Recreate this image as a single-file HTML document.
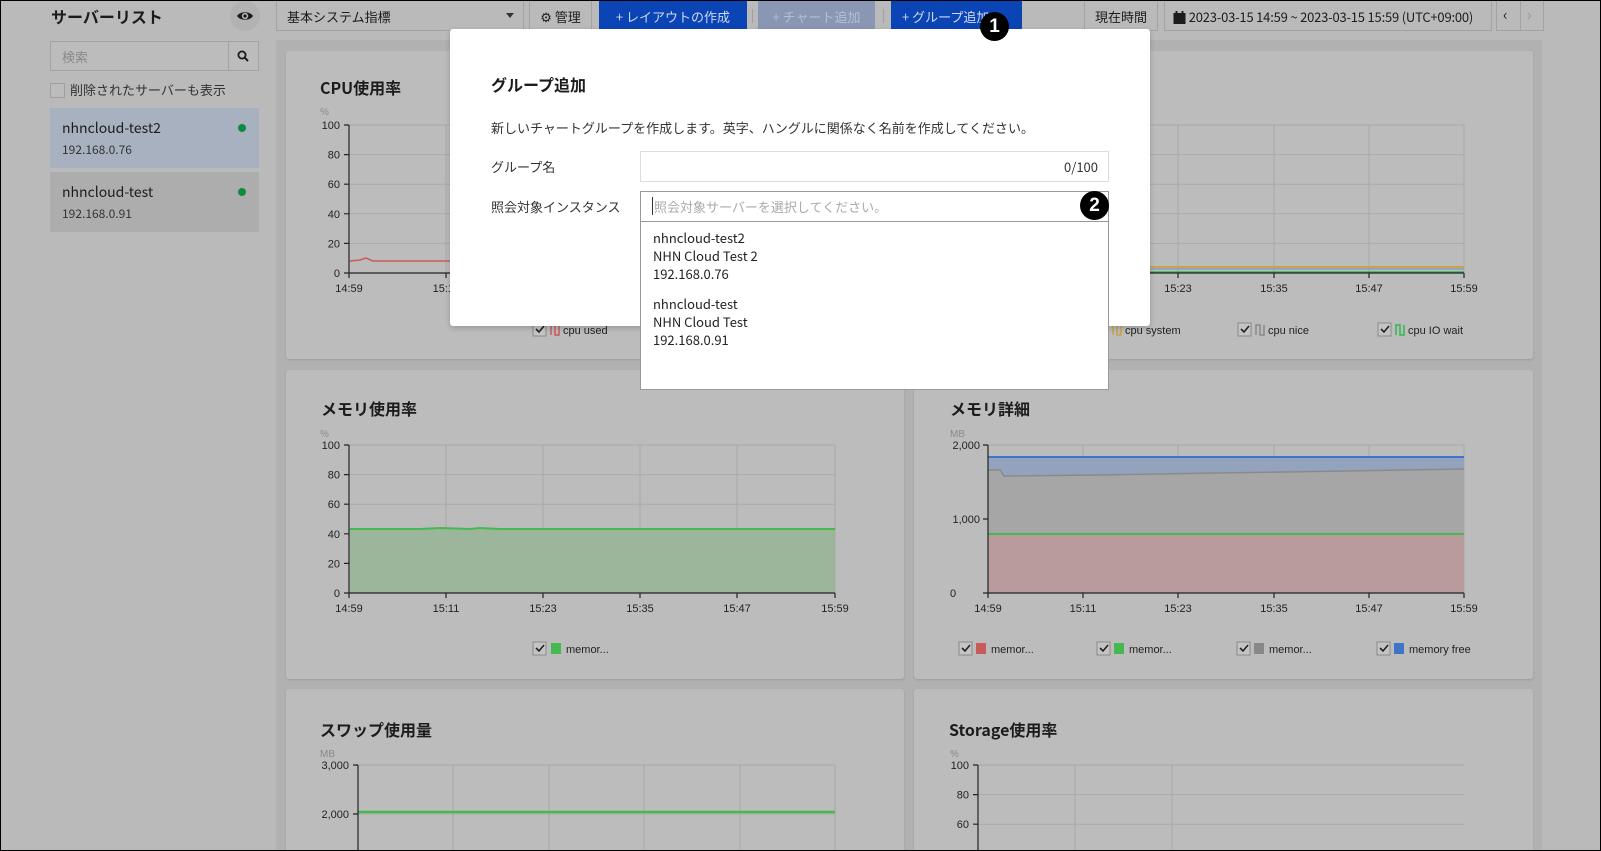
<!DOCTYPE html>
<html style="width:1601px;height:851px;overflow:hidden"><head><meta charset="utf-8">
<style>
*{box-sizing:border-box;margin:0;padding:0}
body{width:1601px;height:851px;overflow:hidden;background:#bababa;font-family:"Noto Sans CJK JP","Liberation Sans",sans-serif;color:#1c1c1c;position:relative}
.a{position:absolute}
.card{position:absolute;background:#bcbcbc;border-radius:3px;box-shadow:0 1px 2px rgba(0,0,0,.12)}
.btn{position:absolute;top:0;height:31px;font-size:13px;line-height:31px;text-align:center;border:1px solid #a3a3a3;background:#bababa;color:#1c1c1c;white-space:nowrap;overflow:hidden}
.blue{background:#0b45b5;color:#d0d8ee;border-color:#0b45b5}
.title{position:absolute;font-size:16px;font-weight:bold;color:#1c1c1c}
.dd{font-size:13px;line-height:18px;color:#222}
</style></head><body>
<!-- sidebar -->
<div class="a" style="left:51px;top:4px;font-size:16px;font-weight:bold">サーバーリスト</div>
<div class="a" style="left:230px;top:1px;width:30px;height:30px;border-radius:50%;background:#b2b2b2"></div>
<svg class="a" style="left:236px;top:8px" width="18" height="16" viewBox="0 0 18 16"><path d="M1 8C4 3 14 3 17 8C14 13 4 13 1 8Z" fill="#1c1c1c"/><circle cx="9" cy="8" r="3.2" fill="#b2b2b2"/><circle cx="9" cy="8" r="1.6" fill="#1c1c1c"/></svg>
<div class="a" style="left:50px;top:41px;width:209px;height:30px;border:1px solid #a3a3a3;background:#bcbcbc"></div>
<div class="a" style="left:228px;top:41px;width:1px;height:30px;background:#a3a3a3"></div>
<div class="a" style="left:62px;top:47px;font-size:13px;color:#8a8a8a">検索</div>
<svg class="a" style="left:237px;top:50px" width="12" height="12" viewBox="0 0 12 12"><circle cx="5" cy="5" r="3.6" fill="none" stroke="#1c1c1c" stroke-width="1.8"/><path d="M7.6 7.6L11 11" stroke="#1c1c1c" stroke-width="2"/></svg>
<div class="a" style="left:50px;top:83px;width:15px;height:15px;border:1px solid #a0a0a0;background:#bcbcbc"></div>
<div class="a" style="left:70px;top:80px;font-size:13px;color:#333">削除されたサーバーも表示</div>
<div class="a" style="left:50px;top:108px;width:209px;height:60px;background:#a8b1bf"></div>
<div class="a" style="left:62px;top:118px;font-size:14px">nhncloud-test2</div>
<div class="a" style="left:62px;top:141px;font-size:12px;color:#333">192.168.0.76</div>
<div class="a" style="left:238px;top:124px;width:8px;height:8px;border-radius:50%;background:#0e8a3c"></div>
<div class="a" style="left:50px;top:172px;width:209px;height:60px;background:#adadad"></div>
<div class="a" style="left:62px;top:182px;font-size:14px">nhncloud-test</div>
<div class="a" style="left:62px;top:205px;font-size:12px;color:#333">192.168.0.91</div>
<div class="a" style="left:238px;top:188px;width:8px;height:8px;border-radius:50%;background:#0e8a3c"></div>
<!-- toolbar -->
<div class="btn" style="left:276px;width:248px;text-align:left;padding-left:10px">基本システム指標</div>
<div class="a" style="left:506px;top:13px;width:0;height:0;border-left:4px solid transparent;border-right:4px solid transparent;border-top:5px solid #333"></div>
<div class="btn" style="left:529px;width:63px">⚙ 管理</div>
<div class="btn blue" style="left:599px;width:148px">+ レイアウトの作成</div>
<div class="a" style="left:752px;top:9px;width:1px;height:14px;background:#a0a0a0"></div>
<div class="btn" style="left:758px;width:117px;background:#8997b4;border-color:#8997b4;color:#b5bfd3">+ チャート追加</div>
<div class="a" style="left:883px;top:9px;width:1px;height:14px;background:#a0a0a0"></div>
<div class="btn blue" style="left:891px;width:131px;text-align:left;padding-left:10px">+ グループ追加</div>
<div class="btn" style="left:1084px;width:74px">現在時間</div>
<div class="btn" style="left:1164px;width:328px;font-size:13px;padding-left:8px;text-align:left;letter-spacing:-0.2px">
<svg width="13" height="13" viewBox="0 0 13 13" style="vertical-align:-2px"><rect x="0.5" y="2" width="12" height="11" fill="#1c1c1c"/><rect x="2.5" y="0" width="2" height="3" fill="#1c1c1c"/><rect x="8.5" y="0" width="2" height="3" fill="#1c1c1c"/></svg> 2023-03-15 14:59 ~ 2023-03-15 15:59 (UTC+09:00)</div>
<div class="btn" style="left:1496px;width:48px"></div>
<div class="a" style="left:1520px;top:0;width:1px;height:31px;background:#a3a3a3"></div>
<div class="a" style="left:1503px;top:4px;font-size:15px">‹</div>
<div class="a" style="left:1527px;top:4px;font-size:15px;color:#999">›</div>
<!-- main area -->
<div class="a" style="left:276px;top:40px;width:1266px;height:811px;background:#b1b1b1"></div>
<div class="card" style="left:286px;top:51px;width:618px;height:308px"></div>
<div class="card" style="left:914px;top:51px;width:619px;height:308px"></div>
<div class="card" style="left:286px;top:370px;width:618px;height:309px"></div>
<div class="card" style="left:914px;top:370px;width:619px;height:309px"></div>
<div class="card" style="left:286px;top:689px;width:618px;height:162px;border-radius:3px 3px 0 0"></div>
<div class="card" style="left:914px;top:689px;width:619px;height:162px;border-radius:3px 3px 0 0"></div>
<div class="title" style="left:320px;top:75px">CPU使用率</div>
<div class="title" style="left:321px;top:396px">メモリ使用率</div>
<div class="title" style="left:950px;top:396px">メモリ詳細</div>
<div class="title" style="left:320px;top:717px">スワップ使用量</div>
<div class="title" style="left:949px;top:717px">Storage使用率</div>
<svg class="a" style="left:0;top:0" width="1601" height="851" font-family="Liberation Sans, sans-serif" font-size="11" fill="#222">
<g stroke="#a9a9a9" stroke-width="1">
<path d="M349 125H835M349 154.6H835M349 184.2H835M349 213.8H835M349 243.4H835M446 125V273M543 125V273M640 125V273M737 125V273M835 125V273"/>
<path d="M988 125H1464M988 154.6H1464M988 184.2H1464M988 213.8H1464M988 243.4H1464M1083 125V273M1178 125V273M1274 125V273M1369 125V273M1464 125V273"/>
<path d="M349 445H835M349 474.6H835M349 504.2H835M349 533.8H835M349 563.4H835M446 445V593M543 445V593M640 445V593M737 445V593M835 445V593"/>
<path d="M988 445H1464M988 519H1464M1083 445V593M1178 445V593M1274 445V593M1369 445V593M1464 445V593"/>
<path d="M358 765H835M358 814H835M453 765V851M549 765V851M644 765V851M740 765V851M835 765V851"/>
<path d="M978 765H1464M978 794.6H1464M978 824.2H1464M1075 765V851M1172 765V851"/>
</g>
<path d="M350 261L360 260L366 258L373 261L835 261" fill="none" stroke="#c95a5a" stroke-width="1.5"/>
<path d="M988 267H1464" stroke="#caa24a" stroke-width="2"/><path d="M988 269H1464" stroke="#6f8fc0" stroke-width="1"/><path d="M988 272H1464" stroke="#2fb84a" stroke-width="1.5"/>
<path d="M350 529L420 529L440 528L470 529L480 528L500 529L835 529V593H350Z" fill="#9bb69b"/>
<path d="M350 529L420 529L440 528L470 529L480 528L500 529L835 529" fill="none" stroke="#45b94f" stroke-width="2"/>
<path d="M988 534H1464V593H988Z" fill="#b99b9d"/>
<path d="M988 470L1000 470L1004 476L1100 475L1464 469V534H988Z" fill="#a6a6a6"/>
<path d="M988 457H1464V469L1100 475L1004 476L1000 470L988 470Z" fill="#93a3bd"/>
<path d="M988 457H1464" stroke="#3f74c9" stroke-width="2"/>
<path d="M988 470L1000 470L1004 476L1100 475L1464 469" fill="none" stroke="#8a8a8a" stroke-width="1.5"/>
<path d="M988 534H1464" stroke="#45b94f" stroke-width="2"/>
<path d="M358 812H835" stroke="#45b94f" stroke-width="2.5"/>
<g stroke="#222" stroke-width="1.2" fill="none">
<path d="M349 125V273H835M344 125H349M344 154.6H349M344 184.2H349M344 213.8H349M344 243.4H349M344 273H349M349 273V278M446 273V278M543 273V278M640 273V278M737 273V278M835 273V278"/>
<path d="M988 125V273H1464M1083 273V278M1178 273V278M1274 273V278M1369 273V278M1464 273V278"/>
<path d="M349 445V593H835M344 445H349M344 474.6H349M344 504.2H349M344 533.8H349M344 563.4H349M344 593H349M349 593V598M446 593V598M543 593V598M640 593V598M737 593V598M835 593V598"/>
<path d="M988 445V593H1464M983 445H988M983 519H988M983 593H988M988 593V598M1083 593V598M1178 593V598M1274 593V598M1369 593V598M1464 593V598"/>
<path d="M358 765V851M353 765H358M353 814H358"/>
<path d="M978 765V851M973 765H978M973 794.6H978M973 824.2H978"/>
</g>
<g text-anchor="end">
<text x="340" y="129">100</text><text x="340" y="158.6">80</text><text x="340" y="188.2">60</text><text x="340" y="217.8">40</text><text x="340" y="247.4">20</text><text x="340" y="277">0</text>
<text x="340" y="449">100</text><text x="340" y="478.6">80</text><text x="340" y="508.2">60</text><text x="340" y="537.8">40</text><text x="340" y="567.4">20</text><text x="340" y="597">0</text>
<text x="980" y="449">2,000</text><text x="980" y="523">1,000</text><text x="950" y="597" text-anchor="start">0</text>
<text x="349" y="769">3,000</text><text x="349" y="818">2,000</text>
<text x="969" y="769">100</text><text x="969" y="798.6">80</text><text x="969" y="828.2">60</text>
</g>
<g fill="#8a8a8a" font-size="10"><text x="320" y="115">%</text><text x="320" y="437">%</text><text x="950" y="437">MB</text><text x="320" y="757">MB</text><text x="950" y="757">%</text></g>
<g text-anchor="middle">
<text x="349" y="292">14:59</text><text x="446" y="292">15:11</text>
<text x="1178" y="292">15:23</text><text x="1274" y="292">15:35</text><text x="1369" y="292">15:47</text><text x="1464" y="292">15:59</text>
<text x="349" y="612">14:59</text><text x="446" y="612">15:11</text><text x="543" y="612">15:23</text><text x="640" y="612">15:35</text><text x="737" y="612">15:47</text><text x="835" y="612">15:59</text>
<text x="988" y="612">14:59</text><text x="1083" y="612">15:11</text><text x="1178" y="612">15:23</text><text x="1274" y="612">15:35</text><text x="1369" y="612">15:47</text><text x="1464" y="612">15:59</text>
</g>
<g font-size="11">
<g stroke="#8a8a8a" fill="#c4c4c4"><rect x="533" y="323" width="13" height="13"/><rect x="1238" y="323" width="13" height="13"/><rect x="1378" y="323" width="13" height="13"/><rect x="533" y="642" width="13" height="13"/><rect x="959" y="642" width="13" height="13"/><rect x="1097" y="642" width="13" height="13"/><rect x="1237" y="642" width="13" height="13"/><rect x="1377" y="642" width="13" height="13"/></g>
<g stroke="#222" stroke-width="1.6" fill="none"><path d="M536 329l3 3 5-6M1241 329l3 3 5-6M1381 329l3 3 5-6M536 648l3 3 5-6M962 648l3 3 5-6M1100 648l3 3 5-6M1240 648l3 3 5-6M1380 648l3 3 5-6"/></g>
<g fill="none" stroke-width="1.5"><path d="M551 335V325H555V335H559V325" stroke="#c95a5a"/><path d="M1113 335V325H1117V335H1121V325" stroke="#caa24a"/><path d="M1256 335V325H1260V335H1264V325" stroke="#8a8a8a"/><path d="M1396 335V325H1400V335H1404V325" stroke="#2fb84a"/></g>
<text x="563" y="334">cpu used</text><text x="1125" y="334">cpu system</text><text x="1268" y="334">cpu nice</text><text x="1408" y="334">cpu IO wait</text>
<rect x="551" y="643" width="10" height="11" fill="#45b94f"/><text x="566" y="653">memor...</text>
<rect x="976" y="643" width="10" height="11" fill="#c85a5a"/><text x="991" y="653">memor...</text>
<rect x="1114" y="643" width="10" height="11" fill="#45b94f"/><text x="1129" y="653">memor...</text>
<rect x="1254" y="643" width="10" height="11" fill="#888"/><text x="1269" y="653">memor...</text>
<rect x="1394" y="643" width="10" height="11" fill="#3f74c9"/><text x="1409" y="653">memory free</text>
</g>
</svg>
<!-- modal -->
<div class="a" style="left:450px;top:29px;width:700px;height:297px;background:#fff;border-radius:3px;box-shadow:0 2px 6px rgba(0,0,0,.2)"></div>
<div class="a" style="left:491px;top:72px;font-size:16px;font-weight:bold">グループ追加</div>
<div class="a" style="left:491px;top:118px;font-size:13px;color:#333">新しいチャートグループを作成します。英字、ハングルに関係なく名前を作成してください。</div>
<div class="a" style="left:491px;top:157px;font-size:13px;color:#333">グループ名</div>
<div class="a" style="left:640px;top:151px;width:469px;height:31px;border:1px solid #ddd"></div>
<div class="a" style="left:1000px;top:157px;width:98px;text-align:right;font-size:13px;color:#333">0/100</div>
<div class="a" style="left:491px;top:197px;font-size:13px;color:#333">照会対象インスタンス</div>
<div class="a" style="left:640px;top:191px;width:469px;height:31px;border:1px solid #999"></div>
<div class="a" style="left:652px;top:197px;width:1px;height:18px;background:#333"></div>
<div class="a" style="left:654px;top:197px;font-size:13px;color:#aaa">照会対象サーバーを選択してください。</div>
<div class="a" style="left:640px;top:222px;width:469px;height:168px;background:#fff;border:1px solid #999;border-top:none"></div>
<div class="a dd" style="left:653px;top:229px">nhncloud-test2<br>NHN Cloud Test 2<br>192.168.0.76</div>
<div class="a dd" style="left:653px;top:295px">nhncloud-test<br>NHN Cloud Test<br>192.168.0.91</div>
<div class="a" style="left:980px;top:12px;width:29px;height:29px;border-radius:50%;background:#000;color:#fff;font-weight:bold;font-size:19px;line-height:29px;text-align:center;font-family:'Liberation Sans',sans-serif">1</div>
<div class="a" style="left:1080px;top:191px;width:29px;height:29px;border-radius:50%;background:#000;color:#fff;font-weight:bold;font-size:19px;line-height:29px;text-align:center;font-family:'Liberation Sans',sans-serif">2</div>
<div class="a" style="left:0;top:0;width:1601px;height:851px;border:1px solid #000;pointer-events:none"></div>
</body></html>
